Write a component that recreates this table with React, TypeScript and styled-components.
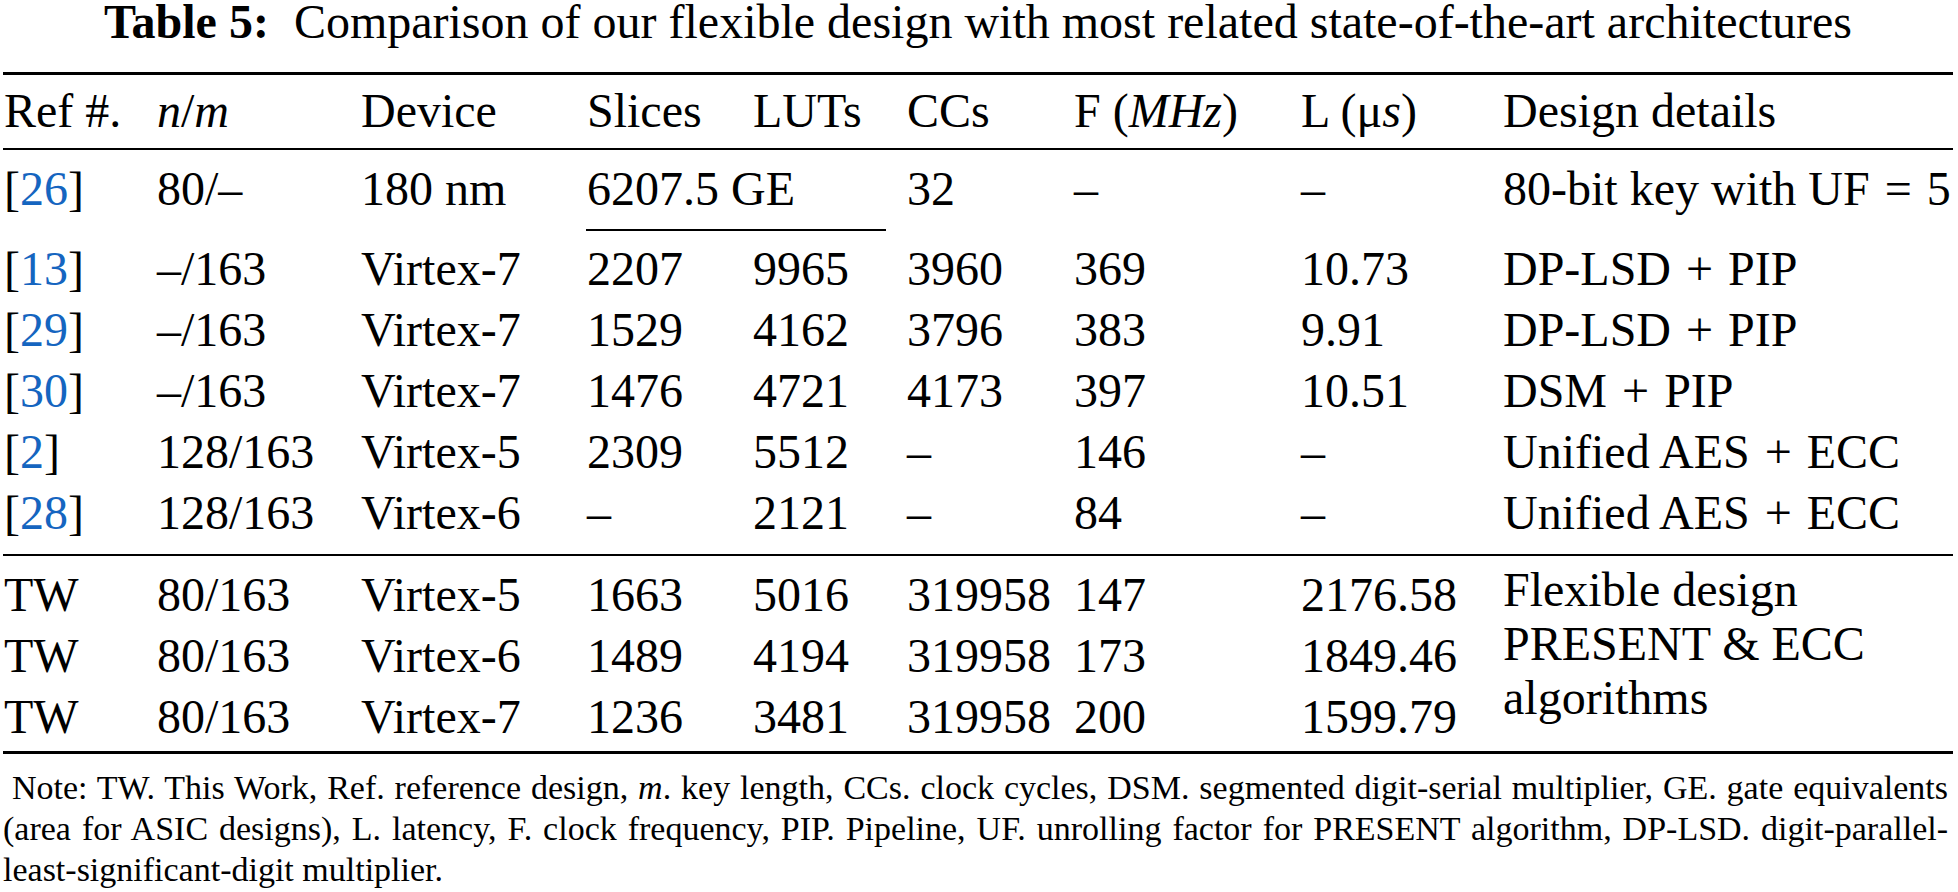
import React from "react";
import styled, { createGlobalStyle } from "styled-components";

const GlobalStyle = createGlobalStyle`
  html, body {
    margin: 0;
    padding: 0;
    background: #ffffff;
  }
  body {
    font-family: "Liberation Serif", "Times New Roman", serif;
    color: #000000;
  }
`;

const Page = styled.div`
  width: 1958px;
  height: 892px;
  overflow: hidden;
  box-sizing: border-box;
  padding: 0 5px 0 3px;
  background: #ffffff;
`;

const Title = styled.h1`
  margin: 0;
  font-size: 48px;
  line-height: 44px;
  font-weight: 400;
  text-align: center;
  white-space: nowrap;
`;

const TitleLabel = styled.b`
  font-weight: 700;
`;

const TitleText = styled.span`
  margin-left: 25px;
`;

const Rule = styled.div<{ $weight: number; $gap: number }>`
  height: ${(p) => p.$weight}px;
  margin-top: ${(p) => p.$gap}px;
  background: #000000;
`;

const columns = "153px 204px 226px 166px 154px 167px 227px 202px 1fr";

const Row = styled.div<{ $gap: number }>`
  display: grid;
  grid-template-columns: ${columns};
  margin-top: ${(p) => p.$gap}px;
  font-size: 48px;
  line-height: 61px;
  white-space: nowrap;
`;

const Group = styled.div<{ $gap: number }>`
  margin-top: ${(p) => p.$gap}px;
`;

const TWGroup = styled.div<{ $gap: number }>`
  display: grid;
  grid-template-columns: ${columns};
  grid-template-rows: repeat(3, 61px);
  margin-top: ${(p) => p.$gap}px;
  font-size: 48px;
  line-height: 61px;
  white-space: nowrap;
`;

const Cell = styled.div<{ $span?: number; $row?: number }>`
  padding-left: 1px;
  grid-column: ${(p) => (p.$span ? `span ${p.$span}` : "auto")};
  grid-row: ${(p) => (p.$row ? p.$row : "auto")};
`;

const DetailsBlock = styled.div`
  grid-column: 9;
  grid-row: 1 / 4;
  padding-left: 1px;
  margin-top: -1px;
  line-height: 54px;
  white-space: normal;
`;

const ClineRow = styled.div<{ $gap: number }>`
  display: grid;
  grid-template-columns: ${columns};
  margin-top: ${(p) => p.$gap}px;
`;

const Cline = styled.div`
  grid-column: 4 / 6;
  height: 2px;
  margin-right: 20px;
  background: #000000;
`;

const RefLink = styled.span`
  color: #1565c0;
`;

const Math = styled.i`
  font-style: italic;
`;

const MathOp = styled.span`
  margin: 0 3px;
`;

const Note = styled.div`
  margin: 13px 5px 0 0;
  font-size: 34px;
  line-height: 41px;
`;

const NoteLine = styled.div<{ $justify?: boolean; $indent?: number }>`
  text-align: ${(p) => (p.$justify ? "justify" : "left")};
  text-align-last: ${(p) => (p.$justify ? "justify" : "auto")};
  text-indent: ${(p) => p.$indent ?? 0}px;
`;

type RefRow = {
  ref: string;
  nm: string;
  device: string;
  slices: string;
  luts: string;
  ccs: string;
  f: string;
  l: string;
  details: [string, string];
};

const refRows: RefRow[] = [
  { ref: "13", nm: "–/163", device: "Virtex-7", slices: "2207", luts: "9965", ccs: "3960", f: "369", l: "10.73", details: ["DP-LSD", "PIP"] },
  { ref: "29", nm: "–/163", device: "Virtex-7", slices: "1529", luts: "4162", ccs: "3796", f: "383", l: "9.91", details: ["DP-LSD", "PIP"] },
  { ref: "30", nm: "–/163", device: "Virtex-7", slices: "1476", luts: "4721", ccs: "4173", f: "397", l: "10.51", details: ["DSM", "PIP"] },
  { ref: "2", nm: "128/163", device: "Virtex-5", slices: "2309", luts: "5512", ccs: "–", f: "146", l: "–", details: ["Unified AES", "ECC"] },
  { ref: "28", nm: "128/163", device: "Virtex-6", slices: "–", luts: "2121", ccs: "–", f: "84", l: "–", details: ["Unified AES", "ECC"] },
];

const twRows = [
  ["TW", "80/163", "Virtex-5", "1663", "5016", "319958", "147", "2176.58"],
  ["TW", "80/163", "Virtex-6", "1489", "4194", "319958", "173", "1849.46"],
  ["TW", "80/163", "Virtex-7", "1236", "3481", "319958", "200", "1599.79"],
];

const Ref = ({ n }: { n: string }) => (
  <>
    [<RefLink>{n}</RefLink>]
  </>
);

export default function App() {
  return (
    <>
      <GlobalStyle />
      <Page>
        <Title>
          <TitleLabel>Table 5:</TitleLabel>
          <TitleText>Comparison of our flexible design with most related state-of-the-art architectures</TitleText>
        </Title>

        <Rule $weight={3} $gap={28} />
        <Row $gap={5}>
          <Cell>Ref #.</Cell>
          <Cell>
            <Math>n</Math>/<Math>m</Math>
          </Cell>
          <Cell>Device</Cell>
          <Cell>Slices</Cell>
          <Cell>LUTs</Cell>
          <Cell>CCs</Cell>
          <Cell>
            F (<Math>MHz</Math>)
          </Cell>
          <Cell>
            L (μ<Math>s</Math>)
          </Cell>
          <Cell>Design details</Cell>
        </Row>
        <Rule $weight={2} $gap={7} />

        <Row $gap={8}>
          <Cell>
            <Ref n="26" />
          </Cell>
          <Cell>80/–</Cell>
          <Cell>180 nm</Cell>
          <Cell $span={2}>6207.5 GE</Cell>
          <Cell>32</Cell>
          <Cell>–</Cell>
          <Cell>–</Cell>
          <Cell>
            80-bit key with UF <MathOp>=</MathOp> 5
          </Cell>
        </Row>
        <ClineRow $gap={10}>
          <Cline />
        </ClineRow>

        <Group $gap={7}>
          {refRows.map((r) => (
            <Row $gap={0} key={r.ref}>
              <Cell>
                <Ref n={r.ref} />
              </Cell>
              <Cell>{r.nm}</Cell>
              <Cell>{r.device}</Cell>
              <Cell>{r.slices}</Cell>
              <Cell>{r.luts}</Cell>
              <Cell>{r.ccs}</Cell>
              <Cell>{r.f}</Cell>
              <Cell>{r.l}</Cell>
              <Cell>
                {r.details[0]} <MathOp>+</MathOp> {r.details[1]}
              </Cell>
            </Row>
          ))}
        </Group>
        <Rule $weight={2} $gap={11} />

        <TWGroup $gap={8}>
          {twRows.map((r, i) => (
            <React.Fragment key={i}>
              {r.map((v, j) => (
                <Cell key={j} $row={i + 1}>
                  {v}
                </Cell>
              ))}
            </React.Fragment>
          ))}
          <DetailsBlock>
            Flexible design
            <br />
            PRESENT &amp; ECC
            <br />
            algorithms
          </DetailsBlock>
        </TWGroup>
        <Rule $weight={3} $gap={4} />

        <Note>
          <NoteLine $justify $indent={9}>
            Note: TW. This Work, Ref. reference design, <Math>m</Math>. key length, CCs. clock cycles, DSM. segmented
            digit-serial multiplier, GE. gate equivalents
          </NoteLine>
          <NoteLine $justify>
            (area for ASIC designs), L. latency, F. clock frequency, PIP. Pipeline, UF. unrolling factor for PRESENT
            algorithm, DP-LSD. digit-parallel-
          </NoteLine>
          <NoteLine>least-significant-digit multiplier.</NoteLine>
        </Note>
      </Page>
    </>
  );
}
